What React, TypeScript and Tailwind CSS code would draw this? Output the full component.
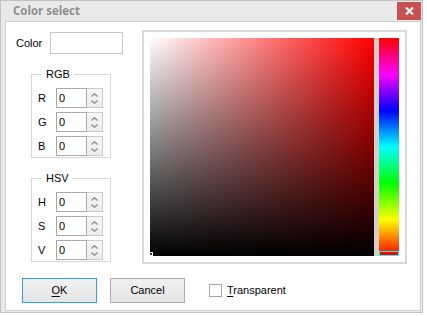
const font = { fontFamily: '"Liberation Sans", Arial, sans-serif' };

function Spinner() {
  return (
    <div className="flex h-[20px] w-[16px] flex-col items-center justify-center gap-[3px] border border-l-0 border-[#c9c9c9] bg-[linear-gradient(to_bottom,#f7f7f7,#ececec)]">
      <svg width="7" height="4" viewBox="0 0 7 4">
        <path d="M0.5 3.5 L3.5 0.8 L6.5 3.5" fill="none" stroke="#7a8a99" strokeWidth="1.2" />
      </svg>
      <svg width="7" height="4" viewBox="0 0 7 4">
        <path d="M0.5 0.5 L3.5 3.2 L6.5 0.5" fill="none" stroke="#7a8a99" strokeWidth="1.2" />
      </svg>
    </div>
  );
}

function NumberRow({ label }: { label: string }) {
  return (
    <div className="flex h-[20px] items-center pl-[6px]">
      <span className="w-[18px] text-[11px] text-black">{label}</span>
      <div className="flex h-[20px] w-[31px] items-center border border-[#a9a9a9] bg-white pl-[2px] text-[11px] text-black">
        0
      </div>
      <Spinner />
    </div>
  );
}

function Group({ label, rows }: { label: string; rows: string[] }) {
  return (
    <div className="relative ml-[25px] mt-[20px] flex h-[84px] w-[80px] flex-col gap-[4px] border border-[#d5d5d5] pt-[13px]">
      <span className="absolute -top-[8px] left-[10px] bg-white px-[4px] text-[11px] leading-[14px] text-black">
        {label}
      </span>
      {rows.map((r) => (
        <NumberRow key={r} label={r} />
      ))}
    </div>
  );
}

function Picker() {
  return (
    <div className="flex h-[234px] w-[265px] border-2 border-[#d9d9d9] p-[6px]">
      <div className="relative h-[218px] w-[224px] bg-[linear-gradient(to_right,#ffffff,#ff0000)]">
        <div className="absolute inset-0 bg-[linear-gradient(to_bottom,rgba(0,0,0,0),#000000)]" />
        <div className="absolute bottom-0 left-[-1px] h-[4px] w-[4px] border border-white bg-[#333]" />
      </div>
      <div className="h-[218px] w-[5px] bg-[#d4d0c8]" />
      <div className="relative h-[218px] w-[20px] bg-[linear-gradient(to_bottom,#ff0000,#ff00ff,#0000ff,#00ffff,#00ff00,#ffff00,#ff0000)]">
        <div className="absolute bottom-0 left-0 h-[5px] w-[20px] border border-[#00ffff] bg-[#ff0000]" />
      </div>
    </div>
  );
}

export default function App() {
  return (
    <div className="h-[316px] w-[427px] bg-white" style={font}>
      <div className="flex h-[313px] w-[423px] flex-col border border-[#c2c2c2] bg-[#e9e9e9] pb-[1px] pl-[4px] pr-[1px]">
        <div className="flex h-[20px] items-start">
          <span
            className="ml-[8px] mt-[2px] text-[11.5px] font-bold leading-[16px] text-[#8f8f8f]"
            style={{ fontFamily: '"Open Sans", "Noto Sans", sans-serif' }}
          >
            Color select
          </span>
          <div className="ml-auto mt-[1px] flex h-[18px] w-[24px] items-center justify-center bg-[#c75050]">
            <svg width="9" height="8" viewBox="0 0 9 8">
              <path d="M1 0.5 L8 7.5 M8 0.5 L1 7.5" stroke="#ffffff" strokeWidth="2" />
            </svg>
          </div>
        </div>
        <div className="flex flex-1 flex-col border border-[#cfcfcf] bg-white">
          <div className="flex pt-[8px]">
            <div className="flex w-[136px] flex-col">
              <div className="mt-[2px] flex h-[22px] items-center">
                <span className="ml-[10px] w-[34px] text-[11px] text-black">Color</span>
                <div className="h-[22px] w-[73px] border border-[#c8c8c8] bg-white" />
              </div>
              <Group label="RGB" rows={['R', 'G', 'B']} />
              <Group label="HSV" rows={['H', 'S', 'V']} />
            </div>
            <Picker />
          </div>
          <div className="ml-[16px] mt-[14px] flex items-center">
            <button className="h-[25px] w-[75px] border border-[#3399ff] bg-[linear-gradient(to_bottom,#f0f0f0,#e5e5e5)] text-[11px] text-black">
              <span className="underline underline-offset-2">O</span>K
            </button>
            <button className="ml-[13px] h-[25px] w-[75px] border border-[#acacac] bg-[linear-gradient(to_bottom,#f0f0f0,#e5e5e5)] text-[11px] text-black">
              Cancel
            </button>
            <div className="ml-[24px] flex items-center">
              <div className="h-[13px] w-[13px] border border-[#a5a5a5] bg-white" />
              <span className="ml-[5px] text-[11px] text-black">
                <span className="underline underline-offset-2">T</span>ransparent
              </span>
            </div>
          </div>
        </div>
      </div>
    </div>
  );
}
